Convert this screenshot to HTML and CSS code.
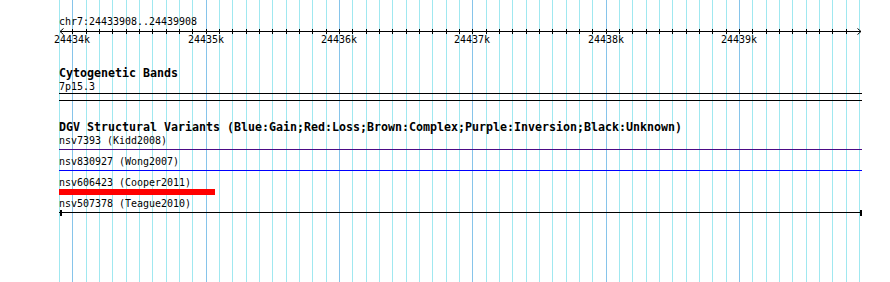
FILE: index.html
```html
<!DOCTYPE html>
<html>
<head>
<meta charset="utf-8">
<link rel="stylesheet" href="styles.css">
</head>
<body>
<div class="view">
  <svg class="grid" width="890" height="282" viewBox="0 0 890 282">
    <g class="minor">
      <line x1="59.5" y1="0" x2="59.5" y2="282"/>
      <line x1="86.5" y1="0" x2="86.5" y2="282"/>
      <line x1="99.5" y1="0" x2="99.5" y2="282"/>
      <line x1="112.5" y1="0" x2="112.5" y2="282"/>
      <line x1="126.5" y1="0" x2="126.5" y2="282"/>
      <line x1="139.5" y1="0" x2="139.5" y2="282"/>
      <line x1="152.5" y1="0" x2="152.5" y2="282"/>
      <line x1="166.5" y1="0" x2="166.5" y2="282"/>
      <line x1="179.5" y1="0" x2="179.5" y2="282"/>
      <line x1="192.5" y1="0" x2="192.5" y2="282"/>
      <line x1="219.5" y1="0" x2="219.5" y2="282"/>
      <line x1="232.5" y1="0" x2="232.5" y2="282"/>
      <line x1="246.5" y1="0" x2="246.5" y2="282"/>
      <line x1="259.5" y1="0" x2="259.5" y2="282"/>
      <line x1="272.5" y1="0" x2="272.5" y2="282"/>
      <line x1="286.5" y1="0" x2="286.5" y2="282"/>
      <line x1="299.5" y1="0" x2="299.5" y2="282"/>
      <line x1="312.5" y1="0" x2="312.5" y2="282"/>
      <line x1="326.5" y1="0" x2="326.5" y2="282"/>
      <line x1="352.5" y1="0" x2="352.5" y2="282"/>
      <line x1="366.5" y1="0" x2="366.5" y2="282"/>
      <line x1="379.5" y1="0" x2="379.5" y2="282"/>
      <line x1="392.5" y1="0" x2="392.5" y2="282"/>
      <line x1="406.5" y1="0" x2="406.5" y2="282"/>
      <line x1="419.5" y1="0" x2="419.5" y2="282"/>
      <line x1="432.5" y1="0" x2="432.5" y2="282"/>
      <line x1="446.5" y1="0" x2="446.5" y2="282"/>
      <line x1="459.5" y1="0" x2="459.5" y2="282"/>
      <line x1="486.5" y1="0" x2="486.5" y2="282"/>
      <line x1="499.5" y1="0" x2="499.5" y2="282"/>
      <line x1="512.5" y1="0" x2="512.5" y2="282"/>
      <line x1="526.5" y1="0" x2="526.5" y2="282"/>
      <line x1="539.5" y1="0" x2="539.5" y2="282"/>
      <line x1="552.5" y1="0" x2="552.5" y2="282"/>
      <line x1="566.5" y1="0" x2="566.5" y2="282"/>
      <line x1="579.5" y1="0" x2="579.5" y2="282"/>
      <line x1="592.5" y1="0" x2="592.5" y2="282"/>
      <line x1="619.5" y1="0" x2="619.5" y2="282"/>
      <line x1="632.5" y1="0" x2="632.5" y2="282"/>
      <line x1="646.5" y1="0" x2="646.5" y2="282"/>
      <line x1="659.5" y1="0" x2="659.5" y2="282"/>
      <line x1="672.5" y1="0" x2="672.5" y2="282"/>
      <line x1="686.5" y1="0" x2="686.5" y2="282"/>
      <line x1="699.5" y1="0" x2="699.5" y2="282"/>
      <line x1="712.5" y1="0" x2="712.5" y2="282"/>
      <line x1="726.5" y1="0" x2="726.5" y2="282"/>
      <line x1="752.5" y1="0" x2="752.5" y2="282"/>
      <line x1="766.5" y1="0" x2="766.5" y2="282"/>
      <line x1="779.5" y1="0" x2="779.5" y2="282"/>
      <line x1="792.5" y1="0" x2="792.5" y2="282"/>
      <line x1="806.5" y1="0" x2="806.5" y2="282"/>
      <line x1="819.5" y1="0" x2="819.5" y2="282"/>
      <line x1="832.5" y1="0" x2="832.5" y2="282"/>
      <line x1="846.5" y1="0" x2="846.5" y2="282"/>
      <line x1="859.5" y1="0" x2="859.5" y2="282"/>
    </g>
    <g class="major">
      <line x1="72.5" y1="0" x2="72.5" y2="282"/>
      <line x1="206.5" y1="0" x2="206.5" y2="282"/>
      <line x1="339.5" y1="0" x2="339.5" y2="282"/>
      <line x1="472.5" y1="0" x2="472.5" y2="282"/>
      <line x1="606.5" y1="0" x2="606.5" y2="282"/>
      <line x1="739.5" y1="0" x2="739.5" y2="282"/>
    </g>
  </svg>

  <div class="panel">
    <section class="track ruler-track">
      <div class="small">chr7:24433908..24439908</div>
      <svg class="ruler" width="803" height="18" viewBox="0 0 803 18">
        <line class="axis" x1="1" y1="3.5" x2="802" y2="3.5"/>
        <path class="arrow" d="M4.5 0.5 L1 3.5 L4.5 6.5"/>
        <path class="arrow" d="M798.5 0.5 L802 3.5 L798.5 6.5"/>
        <g class="ticks">
          <line x1="13.5" y1="1" x2="13.5" y2="6"/>
          <line x1="27.5" y1="1" x2="27.5" y2="6"/>
          <line x1="40.5" y1="1" x2="40.5" y2="6"/>
          <line x1="53.5" y1="1" x2="53.5" y2="6"/>
          <line x1="67.5" y1="1" x2="67.5" y2="6"/>
          <line x1="80.5" y1="1" x2="80.5" y2="6"/>
          <line x1="93.5" y1="1" x2="93.5" y2="6"/>
          <line x1="107.5" y1="1" x2="107.5" y2="6"/>
          <line x1="120.5" y1="1" x2="120.5" y2="6"/>
          <line x1="133.5" y1="1" x2="133.5" y2="6"/>
          <line x1="147.5" y1="1" x2="147.5" y2="6"/>
          <line x1="160.5" y1="1" x2="160.5" y2="6"/>
          <line x1="173.5" y1="1" x2="173.5" y2="6"/>
          <line x1="187.5" y1="1" x2="187.5" y2="6"/>
          <line x1="200.5" y1="1" x2="200.5" y2="6"/>
          <line x1="213.5" y1="1" x2="213.5" y2="6"/>
          <line x1="227.5" y1="1" x2="227.5" y2="6"/>
          <line x1="240.5" y1="1" x2="240.5" y2="6"/>
          <line x1="253.5" y1="1" x2="253.5" y2="6"/>
          <line x1="267.5" y1="1" x2="267.5" y2="6"/>
          <line x1="280.5" y1="1" x2="280.5" y2="6"/>
          <line x1="293.5" y1="1" x2="293.5" y2="6"/>
          <line x1="307.5" y1="1" x2="307.5" y2="6"/>
          <line x1="320.5" y1="1" x2="320.5" y2="6"/>
          <line x1="333.5" y1="1" x2="333.5" y2="6"/>
          <line x1="347.5" y1="1" x2="347.5" y2="6"/>
          <line x1="360.5" y1="1" x2="360.5" y2="6"/>
          <line x1="373.5" y1="1" x2="373.5" y2="6"/>
          <line x1="387.5" y1="1" x2="387.5" y2="6"/>
          <line x1="400.5" y1="1" x2="400.5" y2="6"/>
          <line x1="413.5" y1="1" x2="413.5" y2="6"/>
          <line x1="427.5" y1="1" x2="427.5" y2="6"/>
          <line x1="440.5" y1="1" x2="440.5" y2="6"/>
          <line x1="453.5" y1="1" x2="453.5" y2="6"/>
          <line x1="467.5" y1="1" x2="467.5" y2="6"/>
          <line x1="480.5" y1="1" x2="480.5" y2="6"/>
          <line x1="493.5" y1="1" x2="493.5" y2="6"/>
          <line x1="507.5" y1="1" x2="507.5" y2="6"/>
          <line x1="520.5" y1="1" x2="520.5" y2="6"/>
          <line x1="533.5" y1="1" x2="533.5" y2="6"/>
          <line x1="547.5" y1="1" x2="547.5" y2="6"/>
          <line x1="560.5" y1="1" x2="560.5" y2="6"/>
          <line x1="573.5" y1="1" x2="573.5" y2="6"/>
          <line x1="587.5" y1="1" x2="587.5" y2="6"/>
          <line x1="600.5" y1="1" x2="600.5" y2="6"/>
          <line x1="613.5" y1="1" x2="613.5" y2="6"/>
          <line x1="627.5" y1="1" x2="627.5" y2="6"/>
          <line x1="640.5" y1="1" x2="640.5" y2="6"/>
          <line x1="653.5" y1="1" x2="653.5" y2="6"/>
          <line x1="667.5" y1="1" x2="667.5" y2="6"/>
          <line x1="680.5" y1="1" x2="680.5" y2="6"/>
          <line x1="693.5" y1="1" x2="693.5" y2="6"/>
          <line x1="707.5" y1="1" x2="707.5" y2="6"/>
          <line x1="720.5" y1="1" x2="720.5" y2="6"/>
          <line x1="733.5" y1="1" x2="733.5" y2="6"/>
          <line x1="747.5" y1="1" x2="747.5" y2="6"/>
          <line x1="760.5" y1="1" x2="760.5" y2="6"/>
          <line x1="773.5" y1="1" x2="773.5" y2="6"/>
          <line x1="787.5" y1="1" x2="787.5" y2="6"/>
        </g>
        <g class="labels">
          <text x="13" y="15">24434k</text>
          <text x="147" y="15">24435k</text>
          <text x="280" y="15">24436k</text>
          <text x="413" y="15">24437k</text>
          <text x="547" y="15">24438k</text>
          <text x="680" y="15">24439k</text>
        </g>
      </svg>
    </section>

    <section class="track cyto">
      <div class="track-title">Cytogenetic Bands</div>
      <div class="small">7p15.3</div>
      <div class="band"></div>
    </section>

    <section class="track dgv">
      <div class="track-title">DGV Structural Variants (Blue:Gain;Red:Loss;Brown:Complex;Purple:Inversion;Black:Unknown)</div>
      <div class="feature">
        <div class="small">nsv7393 (Kidd2008)</div>
        <div class="glyph"><div class="hline inversion"></div></div>
      </div>
      <div class="feature">
        <div class="small">nsv830927 (Wong2007)</div>
        <div class="glyph"><div class="hline gain"></div></div>
      </div>
      <div class="feature">
        <div class="small">nsv606423 (Cooper2011)</div>
        <div class="glyph"><div class="bar loss"></div></div>
      </div>
      <div class="feature">
        <div class="small">nsv507378 (Teague2010)</div>
        <div class="glyph unknown"><div class="cap"></div><div class="cap"></div></div>
      </div>
    </section>
  </div>
</div>
</body>
</html>
```
FILE: styles.css
```css
html, body {
  margin: 0;
  padding: 0;
  background: #ffffff;
}

.view {
  position: relative;
  width: 890px;
  height: 282px;
  overflow: hidden;
  font-family: "DejaVu Sans Mono", "Liberation Mono", monospace;
  color: #000;
}

.grid {
  position: absolute;
  left: 0;
  top: 0;
}

.grid line {
  stroke-width: 1;
  shape-rendering: crispEdges;
}

.grid .minor line { stroke: #a0e8f0; }
.grid .major line { stroke: #86c4ea; }

.panel {
  position: relative;
  margin-left: 59px;
  width: 803px;
  padding-top: 15px;
  display: flex;
  flex-direction: column;
}

.track {
  display: flex;
  flex-direction: column;
}

.small {
  font-size: 9.97px;
  line-height: 13px;
  height: 13px;
  white-space: nowrap;
}

.track-title {
  font-size: 11.63px;
  font-weight: bold;
  line-height: 13px;
  height: 13px;
  white-space: nowrap;
}

.ruler {
  display: block;
  overflow: visible;
}

.ruler .axis,
.ruler .ticks line {
  stroke: #000;
  stroke-width: 1;
  shape-rendering: crispEdges;
}

.ruler .arrow {
  fill: none;
  stroke: #000;
  stroke-width: 1;
}

.ruler .labels text {
  font-family: "DejaVu Sans Mono", "Liberation Mono", monospace;
  font-size: 9.97px;
  text-anchor: middle;
  fill: #000;
}

.cyto {
  margin-top: 21px;
}

.band {
  height: 6px;
  border-top: 1px solid #000;
  border-bottom: 1px solid #000;
}

.dgv {
  margin-top: 20px;
}

.feature {
  height: 21px;
  display: flex;
  flex-direction: column;
}

.glyph {
  height: 8px;
  display: flex;
  align-items: flex-start;
}

.hline {
  flex: 1;
  height: 1px;
  margin-top: 2px;
}

.inversion { background: #4b0a86; }
.gain { background: #0000ff; }

.bar {
  width: 156px;
  height: 6px;
}

.loss { background: #ff0000; }

.glyph.unknown {
  justify-content: space-between;
  padding-left: 1px;
  background: linear-gradient(#000, #000) 0 2px / 100% 1px no-repeat;
}

.cap {
  width: 2px;
  height: 6px;
  background: #000;
}
```
